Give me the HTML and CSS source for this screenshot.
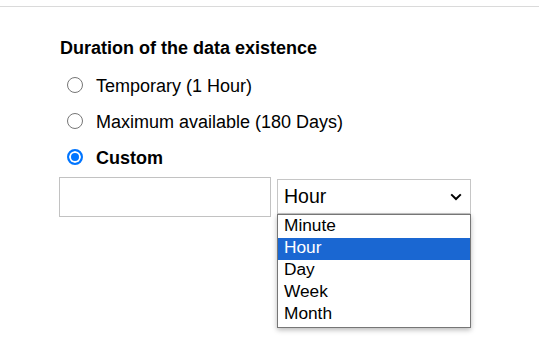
FILE: index.html
```html
<!DOCTYPE html>
<html lang="en">
<head>
<meta charset="utf-8">
<title>Duration</title>
<link rel="stylesheet" href="styles.css">
</head>
<body>
<div class="topline"></div>
<section class="form">
  <h3 class="title">Duration of the data existence</h3>
  <div class="options">
    <label class="row"><input class="radio" type="radio" name="dur"><span>Temporary (1 Hour)</span></label>
    <label class="row"><input class="radio" type="radio" name="dur"><span>Maximum available (180 Days)</span></label>
    <label class="row"><input class="radio" type="radio" name="dur" checked><span class="bold">Custom</span></label>
  </div>
  <div class="custom">
    <div class="text-input"></div>
    <div class="select-wrap">
      <div class="select">
        <span class="select-value">Hour</span>
        <svg class="chevron" width="12" height="8" viewBox="0 0 12 8"><path d="M1.2 1.4 L6 6 L10.8 1.4" fill="none" stroke="#000" stroke-width="2"/></svg>
      </div>
      <ul class="dropdown">
        <li class="opt">Minute</li>
        <li class="opt selected">Hour</li>
        <li class="opt">Day</li>
        <li class="opt">Week</li>
        <li class="opt">Month</li>
      </ul>
    </div>
  </div>
</section>
</body>
</html>
```
FILE: styles.css
```css
html, body {
  margin: 0;
  padding: 0;
  background: #fff;
}
body {
  font-family: "Liberation Sans", Arial, sans-serif;
  color: #000;
  width: 539px;
  height: 355px;
  overflow: hidden;
}
.topline {
  margin-top: 6px;
  height: 1px;
  background: #dadada;
}
.form {
  padding-left: 60px;
}
.title {
  margin: 31px 0 0;
  font-size: 18px;
  line-height: 20px;
  font-weight: bold;
}
.options {
  margin-top: 10px;
  display: flex;
  flex-direction: column;
}
.row {
  height: 36px;
  display: flex;
  align-items: center;
  font-size: 18px;
  line-height: 20px;
}
.radio {
  -webkit-appearance: none;
  appearance: none;
  box-sizing: border-box;
  flex: none;
  width: 16px;
  height: 16px;
  margin: 0 13.5px 3px 6.5px;
  border: 1.5px solid #767676;
  border-radius: 50%;
  background: #fff;
}
.radio:checked {
  border: 2px solid #0075ff;
  background: #0075ff;
  box-shadow: inset 0 0 0 2px #fff;
}
.bold {
  font-weight: bold;
}
.custom {
  margin-top: 1px;
  margin-left: -1px;
  display: flex;
  align-items: flex-start;
  gap: 6px;
}
.text-input {
  width: 210px;
  height: 38px;
  border: 1px solid #c2c2c2;
  background: #fff;
}
.select-wrap {
  position: relative;
  margin-top: 2px;
}
.select {
  box-sizing: border-box;
  width: 194px;
  height: 35px;
  border: 1px solid #c6c6c6;
  padding: 0 8px 0 6px;
  display: flex;
  align-items: center;
  justify-content: space-between;
}
.select-value {
  font-size: 19.5px;
  line-height: 1;
}
.chevron {
  display: block;
}
.dropdown {
  position: absolute;
  top: 35px;
  left: 0;
  box-sizing: border-box;
  width: 194px;
  margin: 0;
  padding: 1px 0;
  list-style: none;
  background: #fff;
  border: 1px solid #767676;
  box-shadow: 0 2px 5px rgba(0, 0, 0, 0.28);
}
.opt {
  height: 22px;
  box-sizing: border-box;
  padding: 0 0 4px 6px;
  font-size: 17.3px;
  line-height: 18px;
}
.opt.selected {
  background: #1a67d2;
  color: #fff;
}
```
